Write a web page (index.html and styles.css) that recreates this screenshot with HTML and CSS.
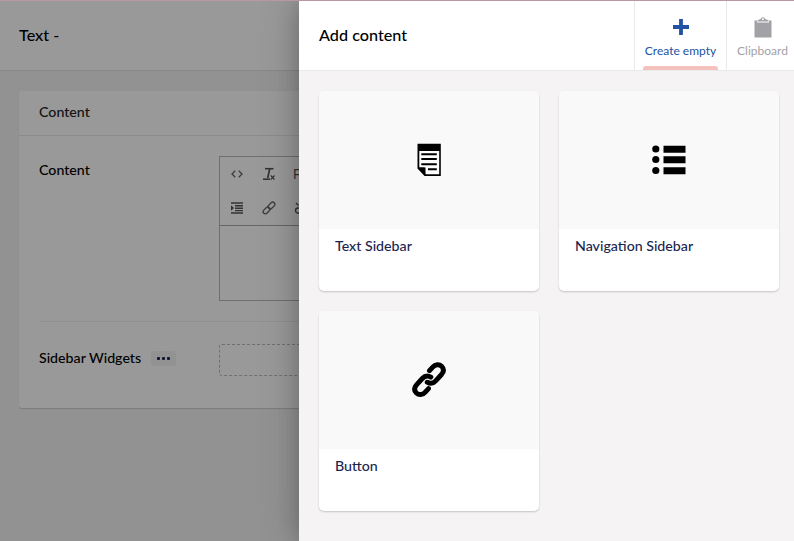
FILE: index.html
```html
<!DOCTYPE html>
<html lang="en">
<head>
<meta charset="utf-8">
<title>Add content</title>
<link rel="stylesheet" href="styles.css">
</head>
<body>
<main class="editor">
  <header class="editor-header"><h1>Text -</h1></header>
  <div class="editor-body">
    <section class="box">
      <h2 class="box-header">Content</h2>
      <div class="box-content">
        <div class="property property-content">
          <div class="label">Content</div>
          <div class="rte">
            <div class="toolbar">
              <div class="tool-row">
                <svg width="16" height="16" viewBox="0 0 16 16" fill="none" stroke="#666" stroke-width="1.300"><path d="M6.200 4.800 3 8l3.200 3.200M9.800 4.800 13 8l-3.200 3.200"/></svg>
                <svg width="16" height="16" viewBox="0 0 16 16" fill="none" stroke="#555"><path d="M4 2.700h8.500" stroke-width="1.600"/><path d="M8.700 3 6.700 12" stroke-width="1.700"/><path d="M2 13.200h7" stroke-width="1.600"/><path d="m9.800 9.500 3.700 4.200m0-4.200-3.700 4.200" stroke-width="1.200"/></svg>
                <span class="format">F</span>
              </div>
              <div class="tool-row">
                <svg width="16" height="16" viewBox="0 0 16 16" fill="#555"><path d="M2 2.300h12v1.500H2zM6 5h8v1.500H6zM6 7.500h8V9H6zM6 10h8v1.300H6zM2 12.300h12v1.500H2zM2 5.300 5 8l-3 2.700z"/></svg>
                <svg width="16" height="16" viewBox="0 0 16 16" fill="none" stroke="#666" stroke-width="1.300"><g transform="rotate(-45 8 8)"><rect x=".6" y="5.800" width="7.800" height="4.400" rx="2.200"/><rect x="7.600" y="5.800" width="7.800" height="4.400" rx="2.200"/></g></svg>
                <svg width="16" height="16" viewBox="0 0 16 16" fill="none" stroke="#555" stroke-width="1.400"><path d="M8 8H5a2.400 2.400 0 1 0 0 5H8M3 3l2.500 2.500M8 2v3"/></svg>
              </div>
            </div>
          </div>
        </div>
        <div class="property property-widgets">
          <div class="label">Sidebar Widgets <span class="more"><i></i><i></i><i></i></span></div>
          <div class="add-area"></div>
        </div>
      </div>
    </section>
  </div>
</main>
<div class="backdrop"></div>
<aside class="panel">
  <header class="panel-header">
    <h1>Add content</h1>
    <nav class="tabs">
      <a class="tab active">
        <svg class="plus" width="20" height="20" viewBox="0 0 20 20" fill="currentColor"><path d="M8.100 2h3.800v6.100H18v3.800h-6.100V18H8.100v-6.100H2V8.100h6.100z"/></svg>
        <span>Create empty</span>
      </a>
      <a class="tab">
        <svg class="clip" width="20" height="22" viewBox="0 0 20 22" fill="currentColor"><path d="M1.500 4.500H4v2h12v-2h2.500v17h-17z"/><path fill-rule="evenodd" d="M4.500 5.500V4.200L7.700 3a2.400 2.400 0 0 1 4.600 0l3.200 1.200v1.300zM10 2.300a1 1 0 1 0 0 2 1 1 0 0 0 0-2z"/></svg>
        <span>Clipboard</span>
      </a>
    </nav>
  </header>
  <div class="cards">
    <article class="card">
      <div class="card-image">
        <svg width="34" height="34" viewBox="0 0 34 34"><path fill="#fff" d="M6.500 2h20v29.500H13L6.500 25z"/><path fill-rule="evenodd" d="M5.500.800h23.300v32.200H12.500l-7-7.500zM7.300 8v16.500h6.200V31.300h13.700V8z"/><path d="M9.300 10.300h15.500v1.900H9.300zM9.300 15h15.500v2H9.300zM9.300 20.200h15.500V22.200H9.300zM16 25.300h8.800v1.900H16zM6 24.500h6.500L13.500 32.500z"/></svg>
      </div>
      <h3>Text Sidebar</h3>
    </article>
    <article class="card">
      <div class="card-image">
        <svg width="34" height="34" viewBox="0 0 34 34"><circle cx="3.800" cy="6" r="3.600"/><circle cx="3.800" cy="16.500" r="3.600"/><circle cx="3.800" cy="27.500" r="3.600"/><path d="M11.500 2.800h22v7h-22zM11.500 13.300h22v7h-22zM11.500 24.200h22v7h-22z"/></svg>
      </div>
      <h3>Navigation Sidebar</h3>
    </article>
    <article class="card">
      <div class="card-image">
        <svg width="34" height="36" viewBox="0 0 34 36" fill="none" stroke="#000" stroke-width="4.900" stroke-linecap="round"><path d="M17.500 8.700 20.700 5.200C23.300 2.200 27.200 2 29.600 4.300 32 6.700 31.900 9.700 29.500 12.500L23.700 18.800C21.300 21.400 18 21.900 15.200 20.200"/><path d="M16.500 27.300 13.300 30.800C10.700 33.800 6.800 34 4.400 31.700 2 29.300 2.100 26.300 4.500 23.500L10.300 17.200C12.700 14.600 16 14.100 18.800 15.800" transform="translate(0 -.7)"/></svg>
      </div>
      <h3>Button</h3>
    </article>
  </div>
</aside>
<div class="top-line"></div>
</body>
</html>
```
FILE: styles.css
```css
* { box-sizing: border-box; }
body {
  margin: 0;
  position: relative;
  height: 541px;
  overflow: hidden;
  background: #f6f3f4;
  font: 14.2px/20px Lato, "Open Sans", sans-serif;
  color: #000;
}
h1, h2, h3 { margin: 0; font-size: 14.2px; line-height: 20px; font-weight: 500; }
svg { display: block; flex: none; }

.editor { padding-top: 1px; }
.editor-header {
  height: 70px;
  display: flex;
  align-items: center;
  padding: 0 0 2px 19px;
  background: #fff;
  border-bottom: 1px solid #e3e0e0;
}
.editor-header h1, .panel-header h1 { font-size: 16.200px; font-weight: 500; }
.editor-body { padding: 20px 19px; }
.box { height: 317px; background: #fff; border-radius: 3px; box-shadow: 0 1px 1px rgba(0, 0, 0, .16); }
.box-header {
  height: 45px;
  padding: 11px 20px;
  border-bottom: 1px solid #e9e9eb;
  color: #222;
}
.box-content { padding: 20px; }
.property { display: grid; grid-template-columns: 180px 1fr; }
.property-content { height: 166px; border-bottom: 1px solid #f0eff1; }
.property-widgets { padding-top: 22px; }
.label { padding-top: 4px; font-weight: 500; white-space: nowrap; }
.rte { height: 145px; border: 1px solid #b9b9b9; }
.toolbar { height: 69px; border-bottom: 1px solid #a8a8a8; }
.tool-row { height: 34px; display: flex; align-items: center; gap: 16px; padding-left: 9px; }
.format { font: 14px "Liberation Sans", sans-serif; color: #555; }
.property-widgets .label { display: flex; align-items: flex-start; padding-top: 4px; }
.more {
  display: flex;
  justify-content: center;
  align-items: center;
  gap: 2px;
  width: 25px;
  height: 15px;
  margin: 3px 0 0 10px;
  border-radius: 3px;
  background: #f6f3f4;
}
.more i { width: 3px; height: 3px; border-radius: 1px; background: #1b264f; }
.add-area { height: 32px; border: 1px dashed #bbbabf; border-radius: 3px; }

.backdrop { position: absolute; inset: 0; background: rgba(0, 0, 0, .4); }
.panel {
  position: absolute;
  top: 1px;
  left: 299px;
  right: 0;
  height: 540px;
  background: #f6f3f4;
  box-shadow: 0 0 40px rgba(0, 0, 0, .2), 0 0 20px rgba(0, 0, 0, .18);
}
.panel-header {
  display: flex;
  justify-content: space-between;
  align-items: center;
  height: 70px;
  padding-left: 20px;
  background: #fff;
  border-bottom: 1px solid #e9e9eb;
}
.panel-header h1 { padding-bottom: 2px; }
.tabs { display: flex; height: 69px; }
.tab {
  position: relative;
  display: flex;
  flex-direction: column;
  align-items: center;
  padding-top: 16px;
  width: 92px;
  border-left: 1px solid #e9e9eb;
  color: #a2a1a6;
  font-size: 12px;
  line-height: 16px;
}
.tab:last-child { width: 68px; padding-left: 4px; }
.tab span { margin-top: 6px; white-space: nowrap; }
.tab .clip { margin-top: -1px; margin-bottom: -1px; }
.active { color: #2152a3; }
.active::after {
  content: "";
  position: absolute;
  left: 8px;
  right: 8px;
  bottom: 0;
  height: 4px;
  border-radius: 3px 3px 0 0;
  background: #f5c1bc;
}
.cards { display: grid; grid-template-columns: 220px 220px; gap: 20px; padding: 20px 0 20px 20px; }
.card {
  height: 200px;
  background: #fff;
  border-radius: 5px;
  overflow: hidden;
  box-shadow: 0 1px 2px rgba(0, 0, 0, .2);
}
.card-image { height: 138px; display: flex; align-items: center; justify-content: center; background: #f9f9f9; }
.card h3 { padding: 7px 16px; color: #1b264f; }
.top-line { position: absolute; top: 0; left: 0; right: 0; height: 1px; background: #b898a2; }
```
